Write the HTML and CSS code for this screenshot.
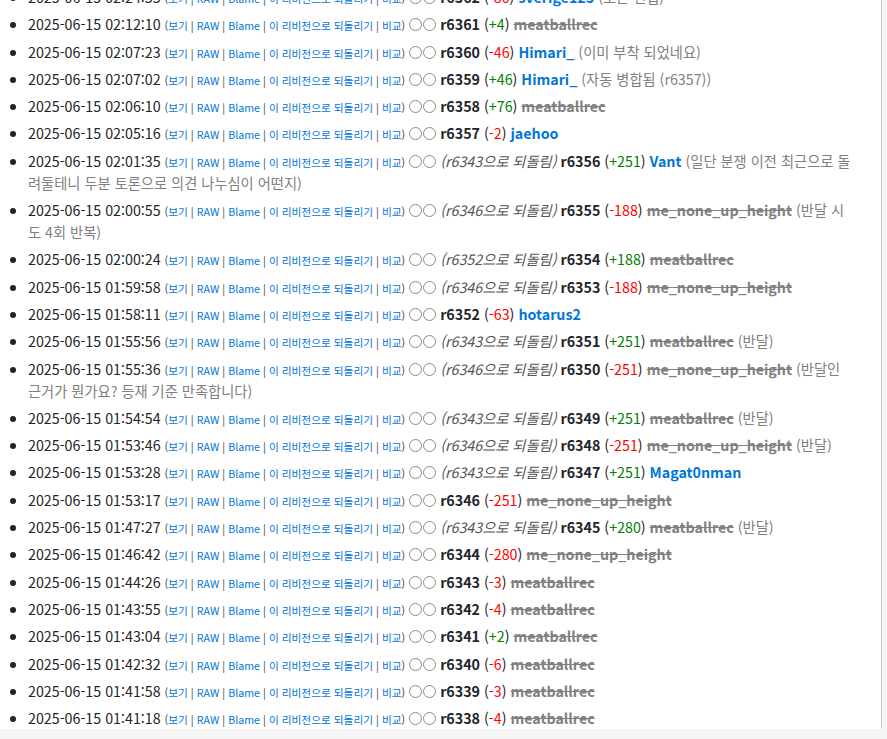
FILE: index.html
```html
<!DOCTYPE html>
<html lang="ko">
<head>
<meta charset="utf-8">
<link rel="stylesheet" href="styles.css">
</head>
<body>
<div class="page">
<ul class="history">
<li><span class="time">2025-06-15 02:24:55</span> <span class="tools">(<a>보기</a> | <a>RAW</a> | <a>Blame</a> | <a>이 리비전으로 되돌리기</a> | <a>비교</a>)</span> <span class="radio"></span><span class="radio"></span> <b class="rev">r6362</b> (<span class="minus">-80</span>) <a class="user">sverige123</a> <span class="log">(오픈 편집)</span></li>
<li><span class="time">2025-06-15 02:12:10</span> <span class="tools">(<a>보기</a> | <a>RAW</a> | <a>Blame</a> | <a>이 리비전으로 되돌리기</a> | <a>비교</a>)</span> <span class="radio"></span><span class="radio"></span> <b class="rev">r6361</b> (<span class="plus">+4</span>) <del class="deleted">meatballrec</del></li>
<li><span class="time">2025-06-15 02:07:23</span> <span class="tools">(<a>보기</a> | <a>RAW</a> | <a>Blame</a> | <a>이 리비전으로 되돌리기</a> | <a>비교</a>)</span> <span class="radio"></span><span class="radio"></span> <b class="rev">r6360</b> (<span class="minus">-46</span>) <a class="user">Himari_</a> <span class="log">(이미 부착 되었네요)</span></li>
<li><span class="time">2025-06-15 02:07:02</span> <span class="tools">(<a>보기</a> | <a>RAW</a> | <a>Blame</a> | <a>이 리비전으로 되돌리기</a> | <a>비교</a>)</span> <span class="radio"></span><span class="radio"></span> <b class="rev">r6359</b> (<span class="plus">+46</span>) <a class="user">Himari_</a> <span class="log">(자동 병합됨 (r6357))</span></li>
<li><span class="time">2025-06-15 02:06:10</span> <span class="tools">(<a>보기</a> | <a>RAW</a> | <a>Blame</a> | <a>이 리비전으로 되돌리기</a> | <a>비교</a>)</span> <span class="radio"></span><span class="radio"></span> <b class="rev">r6358</b> (<span class="plus">+76</span>) <del class="deleted">meatballrec</del></li>
<li><span class="time">2025-06-15 02:05:16</span> <span class="tools">(<a>보기</a> | <a>RAW</a> | <a>Blame</a> | <a>이 리비전으로 되돌리기</a> | <a>비교</a>)</span> <span class="radio"></span><span class="radio"></span> <b class="rev">r6357</b> (<span class="minus">-2</span>) <a class="user">jaehoo</a></li>
<li><span class="time">2025-06-15 02:01:35</span> <span class="tools">(<a>보기</a> | <a>RAW</a> | <a>Blame</a> | <a>이 리비전으로 되돌리기</a> | <a>비교</a>)</span> <span class="radio"></span><span class="radio"></span> <i class="revert">(r6343으로 되돌림)</i> <b class="rev">r6356</b> (<span class="plus">+251</span>) <a class="user">Vant</a> <span class="log">(일단 분쟁 이전 최근으로 돌려둘테니 두분 토론으로 의견 나누심이 어떤지)</span></li>
<li><span class="time">2025-06-15 02:00:55</span> <span class="tools">(<a>보기</a> | <a>RAW</a> | <a>Blame</a> | <a>이 리비전으로 되돌리기</a> | <a>비교</a>)</span> <span class="radio"></span><span class="radio"></span> <i class="revert">(r6346으로 되돌림)</i> <b class="rev">r6355</b> (<span class="minus">-188</span>) <del class="deleted">me_none_up_height</del> <span class="log">(반달 시도 4회 반복)</span></li>
<li><span class="time">2025-06-15 02:00:24</span> <span class="tools">(<a>보기</a> | <a>RAW</a> | <a>Blame</a> | <a>이 리비전으로 되돌리기</a> | <a>비교</a>)</span> <span class="radio"></span><span class="radio"></span> <i class="revert">(r6352으로 되돌림)</i> <b class="rev">r6354</b> (<span class="plus">+188</span>) <del class="deleted">meatballrec</del></li>
<li><span class="time">2025-06-15 01:59:58</span> <span class="tools">(<a>보기</a> | <a>RAW</a> | <a>Blame</a> | <a>이 리비전으로 되돌리기</a> | <a>비교</a>)</span> <span class="radio"></span><span class="radio"></span> <i class="revert">(r6346으로 되돌림)</i> <b class="rev">r6353</b> (<span class="minus">-188</span>) <del class="deleted">me_none_up_height</del></li>
<li><span class="time">2025-06-15 01:58:11</span> <span class="tools">(<a>보기</a> | <a>RAW</a> | <a>Blame</a> | <a>이 리비전으로 되돌리기</a> | <a>비교</a>)</span> <span class="radio"></span><span class="radio"></span> <b class="rev">r6352</b> (<span class="minus">-63</span>) <a class="user">hotarus2</a></li>
<li><span class="time">2025-06-15 01:55:56</span> <span class="tools">(<a>보기</a> | <a>RAW</a> | <a>Blame</a> | <a>이 리비전으로 되돌리기</a> | <a>비교</a>)</span> <span class="radio"></span><span class="radio"></span> <i class="revert">(r6343으로 되돌림)</i> <b class="rev">r6351</b> (<span class="plus">+251</span>) <del class="deleted">meatballrec</del> <span class="log">(반달)</span></li>
<li><span class="time">2025-06-15 01:55:36</span> <span class="tools">(<a>보기</a> | <a>RAW</a> | <a>Blame</a> | <a>이 리비전으로 되돌리기</a> | <a>비교</a>)</span> <span class="radio"></span><span class="radio"></span> <i class="revert">(r6346으로 되돌림)</i> <b class="rev">r6350</b> (<span class="minus">-251</span>) <del class="deleted">me_none_up_height</del> <span class="log">(반달인 근거가 뭔가요? 등재 기준 만족합니다)</span></li>
<li><span class="time">2025-06-15 01:54:54</span> <span class="tools">(<a>보기</a> | <a>RAW</a> | <a>Blame</a> | <a>이 리비전으로 되돌리기</a> | <a>비교</a>)</span> <span class="radio"></span><span class="radio"></span> <i class="revert">(r6343으로 되돌림)</i> <b class="rev">r6349</b> (<span class="plus">+251</span>) <del class="deleted">meatballrec</del> <span class="log">(반달)</span></li>
<li><span class="time">2025-06-15 01:53:46</span> <span class="tools">(<a>보기</a> | <a>RAW</a> | <a>Blame</a> | <a>이 리비전으로 되돌리기</a> | <a>비교</a>)</span> <span class="radio"></span><span class="radio"></span> <i class="revert">(r6346으로 되돌림)</i> <b class="rev">r6348</b> (<span class="minus">-251</span>) <del class="deleted">me_none_up_height</del> <span class="log">(반달)</span></li>
<li><span class="time">2025-06-15 01:53:28</span> <span class="tools">(<a>보기</a> | <a>RAW</a> | <a>Blame</a> | <a>이 리비전으로 되돌리기</a> | <a>비교</a>)</span> <span class="radio"></span><span class="radio"></span> <i class="revert">(r6343으로 되돌림)</i> <b class="rev">r6347</b> (<span class="plus">+251</span>) <a class="user">Magat0nman</a></li>
<li><span class="time">2025-06-15 01:53:17</span> <span class="tools">(<a>보기</a> | <a>RAW</a> | <a>Blame</a> | <a>이 리비전으로 되돌리기</a> | <a>비교</a>)</span> <span class="radio"></span><span class="radio"></span> <b class="rev">r6346</b> (<span class="minus">-251</span>) <del class="deleted">me_none_up_height</del></li>
<li><span class="time">2025-06-15 01:47:27</span> <span class="tools">(<a>보기</a> | <a>RAW</a> | <a>Blame</a> | <a>이 리비전으로 되돌리기</a> | <a>비교</a>)</span> <span class="radio"></span><span class="radio"></span> <i class="revert">(r6343으로 되돌림)</i> <b class="rev">r6345</b> (<span class="plus">+280</span>) <del class="deleted">meatballrec</del> <span class="log">(반달)</span></li>
<li><span class="time">2025-06-15 01:46:42</span> <span class="tools">(<a>보기</a> | <a>RAW</a> | <a>Blame</a> | <a>이 리비전으로 되돌리기</a> | <a>비교</a>)</span> <span class="radio"></span><span class="radio"></span> <b class="rev">r6344</b> (<span class="minus">-280</span>) <del class="deleted">me_none_up_height</del></li>
<li><span class="time">2025-06-15 01:44:26</span> <span class="tools">(<a>보기</a> | <a>RAW</a> | <a>Blame</a> | <a>이 리비전으로 되돌리기</a> | <a>비교</a>)</span> <span class="radio"></span><span class="radio"></span> <b class="rev">r6343</b> (<span class="minus">-3</span>) <del class="deleted">meatballrec</del></li>
<li><span class="time">2025-06-15 01:43:55</span> <span class="tools">(<a>보기</a> | <a>RAW</a> | <a>Blame</a> | <a>이 리비전으로 되돌리기</a> | <a>비교</a>)</span> <span class="radio"></span><span class="radio"></span> <b class="rev">r6342</b> (<span class="minus">-4</span>) <del class="deleted">meatballrec</del></li>
<li><span class="time">2025-06-15 01:43:04</span> <span class="tools">(<a>보기</a> | <a>RAW</a> | <a>Blame</a> | <a>이 리비전으로 되돌리기</a> | <a>비교</a>)</span> <span class="radio"></span><span class="radio"></span> <b class="rev">r6341</b> (<span class="plus">+2</span>) <del class="deleted">meatballrec</del></li>
<li><span class="time">2025-06-15 01:42:32</span> <span class="tools">(<a>보기</a> | <a>RAW</a> | <a>Blame</a> | <a>이 리비전으로 되돌리기</a> | <a>비교</a>)</span> <span class="radio"></span><span class="radio"></span> <b class="rev">r6340</b> (<span class="minus">-6</span>) <del class="deleted">meatballrec</del></li>
<li><span class="time">2025-06-15 01:41:58</span> <span class="tools">(<a>보기</a> | <a>RAW</a> | <a>Blame</a> | <a>이 리비전으로 되돌리기</a> | <a>비교</a>)</span> <span class="radio"></span><span class="radio"></span> <b class="rev">r6339</b> (<span class="minus">-3</span>) <del class="deleted">meatballrec</del></li>
<li><span class="time">2025-06-15 01:41:18</span> <span class="tools">(<a>보기</a> | <a>RAW</a> | <a>Blame</a> | <a>이 리비전으로 되돌리기</a> | <a>비교</a>)</span> <span class="radio"></span><span class="radio"></span> <b class="rev">r6338</b> (<span class="minus">-4</span>) <del class="deleted">meatballrec</del></li>
</ul>
</div>
</body>
</html>
```

FILE: styles.css
```css
html, body {
  margin: 0;
  padding: 0;
  background: #f5f5f5;
  height: 100%;
  overflow: hidden;
}
.page {
  width: 882px;
  min-height: 100%;
  background: #fff;
  border-right: 1px solid #c8c8c8;
  font-family: "Noto Sans CJK KR", "Noto Sans", sans-serif;
  font-size: 14.25px;
  color: #212529;
  padding: 0 28px 0 0;
  box-sizing: border-box;
}
.history {
  margin: -14px 0 0 0;
  padding: 0 0 0 28px;
  list-style: disc;
}
.history li {
  line-height: 22px;
  margin-bottom: 5.3px;
}
.history li > * {
  line-height: 1;
}
.tools {
  font-size: 0.75em;
  color: #373a3c;
}
.tools a {
  color: #0275d8;
}
.radio {
  display: inline-block;
  width: 11px;
  height: 11px;
  border: 1px solid #8a8a8a;
  border-radius: 50%;
  vertical-align: -1px;
  background: #fff;
}
.radio + .radio {
  margin-left: 1px;
}
.rev {
  font-weight: 700;
  color: #212529;
}
.plus { color: #008000; }
.minus { color: #ff0000; }
.user {
  color: #0275d8;
  font-weight: 700;
}
.deleted {
  color: #808080;
  font-weight: 700;
  text-decoration: line-through;
}
.log {
  color: #808080;
}
.revert {
  color: #555;
}
```
